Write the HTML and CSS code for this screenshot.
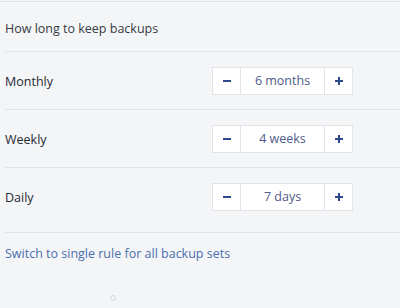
FILE: index.html
```html
<!DOCTYPE html>
<html>
<head>
  <title>Backup retention</title>
  <link rel="stylesheet" href="styles.css">
</head>
<body>
  <div class="panel">
    <div class="panel-header">How long to keep backups</div>

    <div class="rules">
      <div class="rule-row">
        <span class="rule-label">Monthly</span>
        <div class="stepper">
          <button class="step-btn" type="button"><span class="minus"></span></button>
          <span class="step-value">6 months</span>
          <button class="step-btn" type="button"><span class="plus"></span></button>
        </div>
      </div>
      <div class="rule-row">
        <span class="rule-label">Weekly</span>
        <div class="stepper">
          <button class="step-btn" type="button"><span class="minus"></span></button>
          <span class="step-value">4 weeks</span>
          <button class="step-btn" type="button"><span class="plus"></span></button>
        </div>
      </div>
      <div class="rule-row">
        <span class="rule-label">Daily</span>
        <div class="stepper">
          <button class="step-btn" type="button"><span class="minus"></span></button>
          <span class="step-value">7 days</span>
          <button class="step-btn" type="button"><span class="plus"></span></button>
        </div>
      </div>
    </div>

    <div class="panel-footer">
      <a class="switch-link" href="#">Switch to single rule for all backup sets</a>
      <div class="loader"></div>
    </div>
  </div>
</body>
</html>
```

FILE: styles.css
```css
body {
  margin: 0;
  padding-top: 1px;
  background-color: #f4f5f7;
  font-family: "Open Sans", Arial, sans-serif;
  font-size: 12.5px;
  color: #262a33;
}

.panel {
  border-top: 1px solid #e1e3e7;
  padding-left: 5px;
}

.panel-header {
  height: 50px;
  display: flex;
  align-items: center;
  padding-top: 4px;
  box-sizing: border-box;
  color: #363b45;
  border-bottom: 1px solid #e1e3e7;
}

.rules {
  padding-bottom: 7px;
  border-bottom: 1px solid #e1e3e7;
}

.rule-row {
  display: grid;
  grid-template-columns: 207px 141px;
  align-items: center;
  height: 57px;
  border-bottom: 1px solid #e1e3e7;
}

.rule-row:last-child {
  border-bottom: none;
}

.rule-label {
  padding-top: 1px;
}

.stepper {
  display: flex;
  height: 28px;
  box-sizing: border-box;
  border: 1px solid #e2e4e8;
  background-color: #ffffff;
}

.step-btn {
  width: 27px;
  padding: 0;
  border: none;
  background-color: #ffffff;
  display: flex;
  align-items: center;
  justify-content: center;
  cursor: pointer;
}

.step-value {
  flex: 1;
  display: flex;
  align-items: center;
  justify-content: center;
  border-left: 1px solid #e2e4e8;
  border-right: 1px solid #e2e4e8;
  color: #4f5b8a;
}

.minus,
.plus {
  position: relative;
  width: 8px;
  height: 8px;
}

.minus::before,
.plus::before,
.plus::after {
  content: "";
  position: absolute;
  background-color: #2b4a8c;
}

.minus::before,
.plus::before {
  left: 0;
  top: 3px;
  width: 8px;
  height: 2px;
}

.plus::after {
  left: 3px;
  top: 0;
  width: 2px;
  height: 8px;
}

.panel-footer {
  padding-top: 12px;
}

.switch-link {
  color: #4b6eae;
  text-decoration: none;
}

.loader {
  width: 4px;
  height: 4px;
  margin: 33px 0 0 105px;
  border: 1px solid #d3d6db;
  border-radius: 50%;
}
```
